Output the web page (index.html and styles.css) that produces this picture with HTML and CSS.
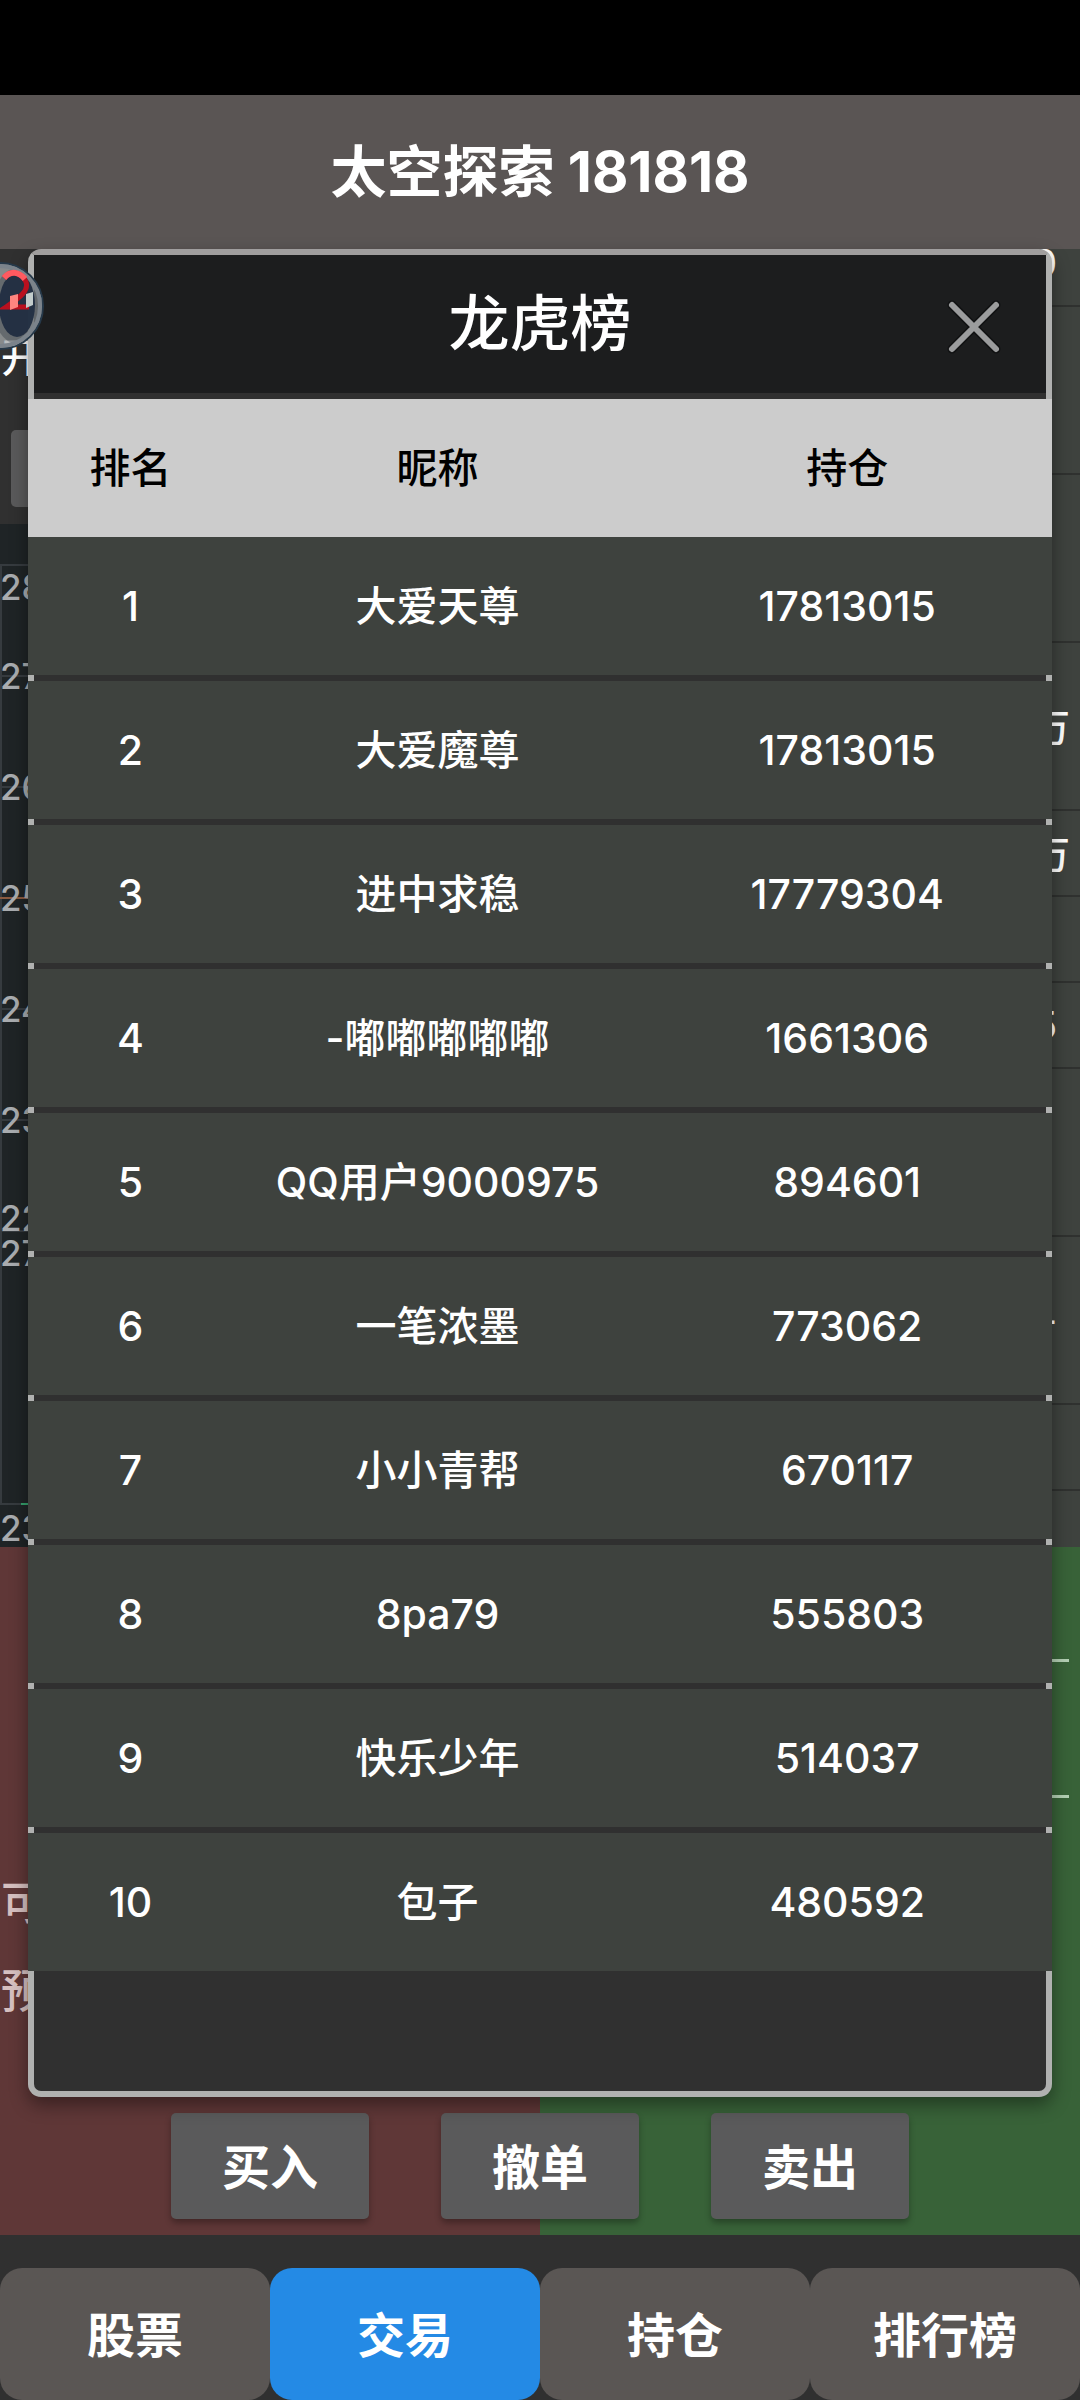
FILE: index.html
```
<!DOCTYPE html>
<html lang="zh-CN">

<head>
  <meta charset="UTF-8">
  <meta name="viewport" content="width=device-width, initial-scale=1.0">
  <title>龙虎榜</title>
  <link rel="stylesheet" href="styles.css">
</head>

<body>
  <div class="status-bar"></div>
  <header class="top-bar">
    <h1>太空探索 181818</h1>
  </header>

  <main class="content">
    <div class="market">
      <div class="market-left">
        <div class="toolbar">
          <span class="open-label">开</span>
          <button class="period-btn" type="button" aria-label="周期"></button>
        </div>
        <svg class="chart" width="100%" height="1023">
          <g stroke="#363b3f" stroke-width="2">
            <line x1="1" y1="41" x2="1" y2="980" />
            <line x1="0" y1="41" x2="100%" y2="41" />
            <line x1="0" y1="152" x2="100%" y2="152" />
            <line x1="0" y1="263" x2="100%" y2="263" />
            <line x1="0" y1="485" x2="100%" y2="485" />
            <line x1="0" y1="596" x2="100%" y2="596" />
            <line x1="0" y1="707" x2="100%" y2="707" />
            <line x1="0" y1="980" x2="100%" y2="980" />
          </g>
          <line x1="0" y1="374" x2="100%" y2="374" stroke="#8a5a40" stroke-width="2" />
          <line x1="21" y1="980" x2="40" y2="980" stroke="#35a06c" stroke-width="2" />
          <g class="axis">
            <text x="0" y="76">28</text>
            <text x="0" y="165">27</text>
            <text x="0" y="276">26</text>
            <text x="0" y="387">25</text>
            <text x="0" y="498">24</text>
            <text x="0" y="609">23</text>
            <text x="0" y="707">22</text>
            <text x="0" y="742">27</text>
            <text x="0" y="1017">23</text>
          </g>
        </svg>
      </div>
      <ul class="quotes">
        <li class="cut short">0</li>
        <li class="tall"></li>
        <li class="tall"></li>
        <li class="tall">万</li>
        <li>万</li>
        <li></li>
        <li class="short">5</li>
        <li class="tall"></li>
        <li class="tall short">-</li>
        <li></li>
        <li class="last"></li>
      </ul>
    </div>

    <section class="orders">
      <div class="forms">
        <div class="buy-form">
          <span>可</span>
          <span>预</span>
        </div>
        <div class="sell-form">
          <input type="text" aria-label="价格">
          <input type="text" aria-label="数量">
        </div>
      </div>
      <div class="actions">
        <button type="button">买入</button>
        <button type="button">撤单</button>
        <button type="button">卖出</button>
      </div>
    </section>

    <div class="modal" role="dialog" aria-labelledby="modalTitle">
      <div class="modal-header">
        <h2 id="modalTitle">龙虎榜</h2>
        <button class="close-btn" type="button" aria-label="关闭">
          <svg width="60" height="60" viewBox="0 0 60 60" stroke-linecap="round">
            <path d="M8 8L52 52M52 8L8 52" stroke="#111213" stroke-width="9" />
            <path d="M8 8L52 52M52 8L8 52" stroke="#9b9c9d" stroke-width="6" />
          </svg>
        </button>
      </div>
      <table class="rank-table">
        <thead>
          <tr><th class="col-rank">排名</th><th>昵称</th><th>持仓</th></tr>
        </thead>
        <tbody>
          <tr><td>1</td><td>大爱天尊</td><td>17813015</td></tr>
          <tr><td>2</td><td>大爱魔尊</td><td>17813015</td></tr>
          <tr><td>3</td><td>进中求稳</td><td>17779304</td></tr>
          <tr><td>4</td><td>-嘟嘟嘟嘟嘟</td><td>1661306</td></tr>
          <tr><td>5</td><td>QQ用户9000975</td><td>894601</td></tr>
          <tr><td>6</td><td>一笔浓墨</td><td>773062</td></tr>
          <tr><td>7</td><td>小小青帮</td><td>670117</td></tr>
          <tr><td>8</td><td>8pa79</td><td>555803</td></tr>
          <tr><td>9</td><td>快乐少年</td><td>514037</td></tr>
          <tr><td>10</td><td>包子</td><td>480592</td></tr>
        </tbody>
      </table>
    </div>

    <!-- floating assistant ball, half docked at the left edge -->
    <svg class="float-ball" width="90" height="90" viewBox="0 0 90 90">
      <path d="M45 2A43 43 0 0 1 45 88Z" fill="#a4a8aa" fill-opacity="0.75" />
      <ellipse cx="62" cy="45" rx="24" ry="38" fill="#17202c" fill-opacity="0.3" />
      <circle cx="45" cy="45" r="43" fill="none" stroke="#26394a" stroke-width="2" />
      <circle cx="45" cy="45" r="40" fill="none" stroke="#7b838b" stroke-width="4" />
      <ellipse cx="62" cy="44" rx="18" ry="32" fill="#212d41" fill-opacity="0.95" />
      <path d="M49 17C56 9 67 11 71 21C74 29 66 36 51 46H74" fill="none" stroke="#b9101f" stroke-width="5" />
      <path d="M49 17C56 9 64 11 70 18" fill="none" stroke="#ff5a60" stroke-width="6" />
      <path d="M55 35L63 33V46L55 49Z" fill="#ff8580" />
      <path d="M71 33L78 31V44L71 47Z" fill="#c3cccb" />
    </svg>
  </main>

  <nav class="tabs">
    <button type="button">股票</button>
    <button class="active" type="button">交易</button>
    <button type="button">持仓</button>
    <button type="button">排行榜</button>
  </nav>
</body>

</html>
```
FILE: styles.css
```
* {
  box-sizing: border-box;
}

body {
  margin: 0;
  min-height: 100vh;
  display: flex;
  flex-direction: column;
  background-color: #303030;
  color: #fff;
  font-family: Inter, "Noto Sans CJK SC", sans-serif;
  font-weight: 500;
  overflow-x: hidden;
}

button {
  border: none;
  padding: 0 0 5px;
  color: #fff;
  font-family: inherit;
  font-size: 48px;
  font-weight: bold;
}

.status-bar {
  height: 95px;
  background-color: #000;
}

.top-bar {
  padding: 37px 0;
  background-color: #5a5554;
  text-align: center;
}

.top-bar h1 {
  margin: 0;
  font-size: 56px;
  line-height: 80px;
}

.content {
  position: relative;
  flex: 1;
  display: flex;
  flex-direction: column;
}

/* market area behind the dialog */
.market {
  display: grid;
  grid-template-columns: 2fr 1fr;
}

.toolbar {
  display: flex;
  flex-direction: column;
  align-items: flex-start;
  padding: 88px 0 17px;
}

.open-label {
  padding-left: 1px;
  margin-bottom: 51px;
  font-size: 40px;
  line-height: 42px;
}

.period-btn {
  width: 198px;
  height: 77px;
  margin-left: 11px;
  border-radius: 5px;
  background-color: #5a5a5b;
}

.chart {
  display: block;
  background-color: #1f2426;
}

.axis {
  fill: #a9acaf;
  font-size: 35px;
}

.quotes {
  list-style: none;
  margin: 0;
  padding: 0;
  background-color: #3e423e;
  font-size: 38px;
}

.quotes li {
  display: flex;
  align-items: center;
  justify-content: flex-end;
  height: 86px;
  padding: 0 10px 4px 0;
  border-bottom: 2px solid #2f312f;
}

.quotes .tall {
  height: 168px;
}

.quotes .short {
  padding: 0 23px 0 0;
}

.quotes .cut {
  height: 58px;
  padding-bottom: 29px;
}

.quotes .last {
  height: 56px;
  border-bottom: none;
}

/* order forms */
.orders {
  flex: 1;
  display: flex;
  flex-direction: column;
  background: linear-gradient(to right, #5f3737 50%, #386238 50%);
}

.forms {
  flex: 1;
  display: grid;
  grid-template-columns: 1fr 1fr;
}

.buy-form {
  display: flex;
  flex-direction: column;
  gap: 24px;
  padding: 323px 0 0 1px;
  color: #d6c0c0;
  font-size: 46px;
  line-height: 64px;
}

.sell-form {
  display: flex;
  flex-direction: column;
  gap: 76px;
  padding: 55px 11px 0;
}

.sell-form input {
  width: 100%;
  height: 60px;
  border: none;
  border-bottom: 3px solid #b3cfb3;
  background: none;
  color: #fff;
  font-size: 38px;
}

.actions {
  display: flex;
  justify-content: center;
  gap: 72px;
  padding-bottom: 16px;
}

.actions button {
  width: 198px;
  height: 106px;
  border-radius: 5px;
  background-color: #5a5a5b;
  box-shadow: 0 4px 6px rgba(0, 0, 0, 0.3);
}

/* ranking dialog */
.modal {
  position: absolute;
  top: 0;
  left: 28px;
  right: 28px;
  padding-bottom: 120px;
  border: 6px solid #b0b1b0;
  border-top-color: #a09e9e;
  border-radius: 13px;
  background-color: #303030;
  box-shadow: 0 8px 18px rgba(0, 0, 0, 0.4);
}

.modal-header {
  position: relative;
  padding: 24px 0;
  margin-bottom: 6px;
  background-color: #1c1d1e;
  text-align: center;
}

.modal-header h2 {
  margin: 0;
  font-size: 61px;
  font-weight: 500;
  line-height: 90px;
}

.close-btn {
  position: absolute;
  top: 42px;
  right: 42px;
  width: 60px;
  height: 60px;
  padding: 0;
  background: none;
}

.close-btn svg {
  display: block;
}

/* rows run over the dialog border on both sides */
.rank-table {
  width: calc(100% + 12px);
  margin: 0 -6px;
  table-layout: fixed;
  border-spacing: 0;
  font-size: 41px;
  line-height: 54px;
  text-align: center;
}

.rank-table th {
  padding: 42px 0;
  background-color: #ccc;
  color: #000;
  font-weight: 500;
}

.rank-table .col-rank {
  width: 20%;
}

.rank-table td {
  padding: 42px 0;
  border-bottom: 6px solid transparent;
  background-color: #3e423e;
  background-clip: padding-box;
}

.rank-table tr:last-child td {
  border-bottom: none;
}

.float-ball {
  position: absolute;
  top: 12px;
  left: -45px;
}

/* bottom tabs */
.tabs {
  display: grid;
  grid-template-columns: repeat(4, 1fr);
  padding-top: 33px;
}

.tabs button {
  height: 132px;
  border-radius: 22px;
  background-color: #5a5654;
}

.tabs .active {
  background-color: #248ae5;
}
```
